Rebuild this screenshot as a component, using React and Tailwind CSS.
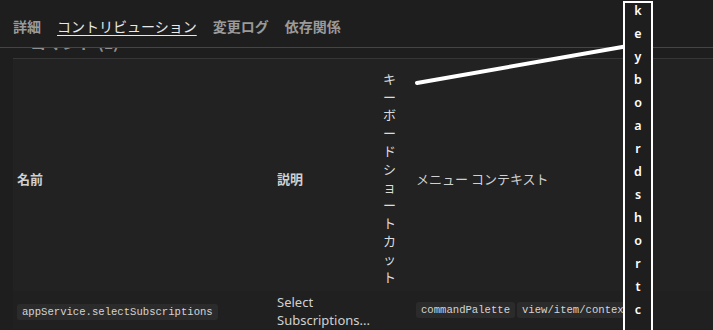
const tabs = [
  { label: '詳細', active: false },
  { label: 'コントリビューション', active: true },
  { label: '変更ログ', active: false },
  { label: '依存関係', active: false },
];

const noteLetters = 'keyboardshortc'.split('');

function Chip({ children }) {
  return (
    <code className="inline-block whitespace-nowrap rounded-[3px] bg-[#2b2b2b] px-[5px] text-[10.6px] leading-[16px] text-[#d4d4d4] [font-family:'Liberation_Mono',monospace]">
      {children}
    </code>
  );
}

export default function App() {
  return (
    <div className="relative h-[330px] w-[713px] overflow-hidden bg-[#1e1e1e] text-[#cccccc] [font-family:'Noto_Sans','Noto_Sans_CJK_JP',sans-serif]">
      {/* tab bar */}
      <div className="flex h-[48px] items-end gap-4 border-b border-[#454545] pb-[11px] pl-[13px] text-[14px] leading-[20px]">
        {tabs.map((t) => (
          <span
            key={t.label}
            className={
              t.active
                ? 'text-[#e8e8e8] underline decoration-1 underline-offset-[3px] [font-family:"Noto_Sans_CJK_JP",sans-serif]'
                : 'font-bold text-[#9a9a9a] [font-family:"Noto_Sans_CJK_JP",sans-serif]'
            }
          >
            {t.label}
          </span>
        ))}
      </div>

      {/* section heading, scrolled under the tab bar */}
      <div className="ml-[13px] h-[11px] overflow-hidden border-b border-[#363636]">
        <div className="-mt-[16px] pl-[17px] text-[16px] font-bold leading-[20px] text-[#8f8f8f] [font-family:'Noto_Sans_CJK_JP',sans-serif]">
          コマンド (1)
        </div>
      </div>

      {/* table */}
      <table className="ml-[13px] w-[700px] table-fixed border-collapse">
        <colgroup>
          <col className="w-[260px]" />
          <col className="w-[106px]" />
          <col className="w-[33px]" />
          <col />
        </colgroup>
        <thead>
          <tr className="h-[232px] bg-[#222222] text-left text-[13px] leading-[18px] text-[#d0d0d0] [font-family:'Noto_Sans_CJK_JP',sans-serif]">
            <th className="px-1 pt-[7px] align-middle font-bold">名前</th>
            <th className="px-1 pt-[7px] align-middle font-bold">説明</th>
            <th className="break-all px-1 pt-[6px] align-middle font-normal text-[#dcdcdc]">キーボードショートカット</th>
            <th className="px-1 pt-[7px] align-middle font-normal">メニュー コンテキスト</th>
          </tr>
        </thead>
        <tbody>
          <tr className="h-[38px] bg-[#202020] text-[13px] leading-[18px]">
            <td className="px-1 align-middle">
              <Chip>appService.selectSubscriptions</Chip>
            </td>
            <td className="px-1 pt-[1px] align-middle text-[#d0d0d0]">Select Subscriptions...</td>
            <td className="px-1" />
            <td className="px-1 align-middle">
              <div className="flex gap-[2px]">
                <Chip>commandPalette</Chip>
                <Chip>view/item/context</Chip>
              </div>
            </td>
          </tr>
        </tbody>
      </table>

      {/* annotation overlay */}
      <svg className="absolute left-0 top-0" width="713" height="330">
        <line x1="417" y1="83" x2="628" y2="46" stroke="#ffffff" strokeWidth="4" strokeLinecap="round" />
      </svg>
      <div className="absolute left-[623px] top-[1px] h-[340px] w-[30px] border-2 border-white bg-[#1e1e1e]">
        <div className="-mt-[4px] flex flex-col items-center text-[12.5px] font-semibold leading-[23px] text-white [font-family:'Noto_Sans',sans-serif]">
          {noteLetters.map((c, i) => (
            <span key={i}>{c}</span>
          ))}
        </div>
      </div>
    </div>
  );
}
